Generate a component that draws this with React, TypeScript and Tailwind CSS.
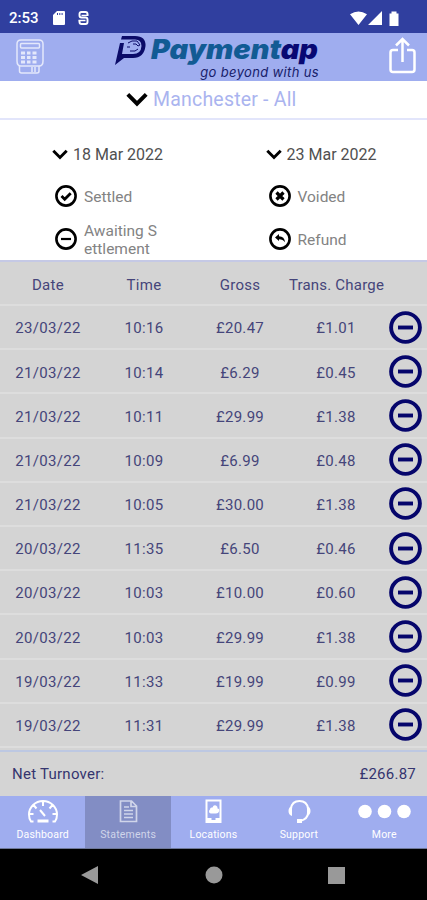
import type { ReactNode } from "react";

const ROWS = [
  ["23/03/22", "10:16", "£20.47", "£1.01"],
  ["21/03/22", "10:14", "£6.29", "£0.45"],
  ["21/03/22", "10:11", "£29.99", "£1.38"],
  ["21/03/22", "10:09", "£6.99", "£0.48"],
  ["21/03/22", "10:05", "£30.00", "£1.38"],
  ["20/03/22", "11:35", "£6.50", "£0.46"],
  ["20/03/22", "10:03", "£10.00", "£0.60"],
  ["20/03/22", "10:03", "£29.99", "£1.38"],
  ["19/03/22", "11:33", "£19.99", "£0.99"],
  ["19/03/22", "11:31", "£29.99", "£1.38"],
];

function Chevron({ className }: { className: string }) {
  return (
    <svg viewBox="0 0 22 15" className={className} fill="none" stroke="currentColor" strokeWidth="4">
      <path d="M1.8 2.4 11 11.6 20.2 2.4" />
    </svg>
  );
}

function Ring({ className, children }: { className: string; children: ReactNode }) {
  return (
    <svg viewBox="0 0 22 22" className={className} fill="none" stroke="currentColor" strokeWidth="2.6">
      <circle cx="11" cy="11" r="9.6" />
      {children}
    </svg>
  );
}

function StatusBar() {
  return (
    <div className="flex h-[33px] shrink-0 items-center bg-[#303f9f] pl-[9px] pr-[27px] pt-[3px] text-white">
      <span className="w-[44px] pt-px text-[15px] font-medium">2:53</span>
      <svg className="h-[14px] w-[12px]" viewBox="0 0 12 14" fill="currentColor">
        <path fillRule="evenodd" d="M4 0h7q1 0 1 1v12q0 1-1 1H1q-1 0-1-1V4zM4 2v2h1V2zM6.3 2v2h1V2zM8.6 2v2h1V2z" />
      </svg>
      <svg className="ml-[13px] h-[14px] w-[11px]" viewBox="0 0 11 14" fill="none" stroke="currentColor" strokeWidth="1.9">
        <path d="M9.500 4V3q0-2-2-2h-4q-2 0-2 2v1.500q0 2 2 2h4q2 0 2 2V11q0 2-2 2h-4q-2 0-2-2V9.500" />
        <path d="M3.500 4.300h7M.5 9.500h7" strokeWidth="1.300" />
      </svg>
      <svg className="ml-auto h-[15px] w-[50px]" viewBox="0 0 50 15" fill="currentColor">
        <path d="M0 3.200Q8.500-2.400 17 3.200L8.500 14zM32 0v14H18zM39.500 2.500h2V.5h5v2h2V15h-9z" />
      </svg>
    </div>
  );
}

function Header() {
  return (
    <header className="flex h-[48px] shrink-0 items-center bg-[#9fadef] text-white">
      <svg className="ml-[16px] h-[36px] w-[28px]" viewBox="0 0 28 36" fill="none" stroke="#e4e8fb" strokeWidth="1.500">
        <path d="M5 1h18q4 0 4 4v17q0 5-4 5H5q-4 0-4-5V5q0-4 4-4z" />
        <rect x="4.500" y="4.500" width="19" height="4.500" rx="1" />
        <path d="M3.500 27v5q0 2 2 2H21q2 0 2-2v-5M16 28v5M19 28v5" />
        <path d="M5 14h4m2 0h3.500m2 0h4M5 18.500h4m2 0h3.500m2 0h4M5 23h4m2 0h3.500m2 0h4" strokeWidth="3" />
      </svg>
      <div className="ml-[70px] flex w-[205px]">
        <svg className="h-[31px] w-[33px] shrink-0" viewBox="0 0 33 31">
          <path fillRule="evenodd" fill="#0b0b68" d="M8 1h13q11 0 10.500 10Q30 23 19 23h-9l-9 7L6 8h4L8 19h11q8 0 8.500-8Q27.500 4.500 21 4.500H7z" />
          <path fill="none" stroke="#0b0b68" strokeWidth="1" d="m14 8 4-2h5l3 4-2 1-2-2h-3m-6 3h3m0 4h5l3-2" />
        </svg>
        <div className="w-[172px] font-['Inter'] italic">
          <svg className="block h-[31px] w-[172px] overflow-visible" viewBox="0 0 172 31">
            <text x="4" y="23.500" textLength="167" lengthAdjust="spacingAndGlyphs" fontSize="26.500" fontWeight="900" fill="#125b94">
              Payment<tspan fill="#080873">ap</tspan>
            </text>
          </svg>
          <div className="mt-[-1px] whitespace-nowrap text-right text-[13px] leading-[14px] tracking-[0.350px] text-[#17206a]">go beyond with us</div>
        </div>
      </div>
      <svg className="mb-[3px] ml-auto mr-[11px] h-[37px] w-[27px]" viewBox="0 0 27 37" fill="none" stroke="currentColor" strokeWidth="2.500">
        <path d="M9 13H4q-2.500 0-2.500 2.500v17Q1.500 35 4 35h19q2.500 0 2.500-2.500v-17Q25.500 13 23 13h-5M13.500 25V2M7 8.500 13.500 2 20 8.500" />
      </svg>
    </header>
  );
}

function Legend({ label, children }: { label: ReactNode; children: ReactNode }) {
  return (
    <div className="flex h-[43px] items-center pl-[55px] text-[15.5px] leading-[18px] text-[#838383]">
      <Ring className="mr-[7px] size-[22px] text-black">{children}</Ring>
      <span className="pt-[2px]">{label}</span>
    </div>
  );
}

function Filters() {
  return (
    <section className="grid h-[142px] shrink-0 grid-cols-2 content-start border-b-2 border-[#c5c9e5] pt-[14px]">
      {["18 Mar 2022", "23 Mar 2022"].map((d) => (
        <div key={d} className="flex h-[40px] items-center pl-[52px] text-[16px] text-[#505050]">
          <Chevron className="mr-[5px] h-[11px] w-[16px] text-black" />
          <span className="pt-[2px]">{d}</span>
        </div>
      ))}
      <Legend label="Settled"><path d="m6.500 11 3.200 3.200 6-6" strokeWidth="2.800" /></Legend>
      <Legend label="Voided"><path d="m7.500 7.500 7 7m0-7-7 7" strokeWidth="3.200" /></Legend>
      <Legend label={<>Awaiting S<br />ettlement</>}><path d="M6 11h10" strokeWidth="2.200" /></Legend>
      <Legend label="Refund">
        <path d="M6 9.500 10 6v2.300q5.500 0 6 6-2-3-6-3V13z" fill="currentColor" stroke="none" />
      </Legend>
    </section>
  );
}

function Statement() {
  return (
    <section className="h-[488px] shrink-0 overflow-hidden bg-[#d4d4d4] text-[15px] tracking-[0.3px] text-[#45457a]">
      <div className="grid h-[44px] grid-cols-[96px_96px_96px_97px_1fr] items-center border-b-2 border-[#dddddd] pt-[4px] text-center">
        <span>Date</span>
        <span>Time</span>
        <span>Gross</span>
        <span className="whitespace-nowrap tracking-[0.2px]">Trans. Charge</span>
      </div>
      {ROWS.map((r, i) => (
        <div key={i} className="grid h-[44.200px] grid-cols-[96px_96px_96px_96px_1fr] items-center border-b-2 border-[#dddddd] text-center">
          {r.map((v, j) => <span key={j} className="pt-[3px]">{v}</span>)}
          <Ring className="ml-[5px] size-[33px] text-[#05056b]"><path d="M6 11h10" /></Ring>
        </div>
      ))}
    </section>
  );
}

function Tab({ label, active, children }: { label: string; active?: boolean; children: ReactNode }) {
  return (
    <div className={`flex flex-col items-center pt-[3px] ${active ? "bg-[#828dc4] text-[#d0d5ea]" : "text-white"}`}>
      <svg className="h-[25px] w-[54px]" viewBox="0 0 54 25" fill="none" stroke="currentColor" strokeWidth="2">{children}</svg>
      <span className="mt-[4px] text-[10.500px] leading-[14px] tracking-[0.200px]">{label}</span>
    </div>
  );
}

function Tabs() {
  return (
    <nav className="grid h-[53px] shrink-0 grid-cols-5 border-b border-[#6e7899] bg-[#9fadef]">
      <Tab label="Dashboard">
        <path d="M17.500 22.500H15Q13 20 13 15.500a14 13.500 0 0 1 28 0q0 4.500-2 7h-2.500M27 2.500V7M17.500 6l3 3.500M36.500 6l-3 3.500M13 15h4.500M41 15h-4.500M24 11l5 6" />
        <path d="M21.500 22h11" strokeWidth="3" />
      </Tab>
      <Tab label="Statements" active>
        <path d="M19.500 2h11l5 5v15.500h-16zM30 2v5.500h5M23 8h5M23 11.500h9M23 15h9M23 18.500h9" strokeWidth="1.700" />
      </Tab>
      <Tab label="Locations">
        <path d="M20.500 1.500h14v21.500h-14z" />
        <path d="M20 19h5.500v2h4v-2H35v5H20zM24 10.500q0-2.500 2.500-2 1-3 3.500-2 2 1 1.500 3 2.500 0 1.500 3-.5 2-3 2h-4q-3 0-3-2 0-1.500 1-2z" fill="currentColor" stroke="none" />
      </Tab>
      <Tab label="Support">
        <path d="M19 14V9.500Q20 2 27.500 2T36 9.500V14q0 6-8 8" />
        <path d="M20 7v10q-3.500-1-3.500-5T20 7zM35 7v10q3.500-1 3.500-5T35 7zM25 20h5v4h-5z" fill="currentColor" stroke="none" />
      </Tab>
      <Tab label="More">
        <g fill="currentColor" stroke="none"><circle cx="8" cy="12.500" r="6.800" /><circle cx="27.500" cy="12.500" r="6.800" /><circle cx="47" cy="12.500" r="6.800" /></g>
      </Tab>
    </nav>
  );
}

export default function App() {
  return (
    <main className="flex h-[900px] w-[427px] flex-col overflow-hidden bg-white font-['Roboto',sans-serif]">
      <StatusBar />
      <Header />
      <div className="flex h-[39px] shrink-0 items-center border-b-2 border-[#e2e5fb] pl-[126px] text-[19.500px] tracking-[0.2px] text-[#aab4ef]">
        <Chevron className="mr-[5px] h-[15px] w-[22px] text-black" />
        Manchester - All
      </div>
      <Filters />
      <Statement />
      <div className="flex h-[46px] shrink-0 items-center justify-between border-t-2 border-[#bdc8e2] bg-[#d4d4d4] pl-[12px] pr-[11px] text-[15px] tracking-[0.250px] text-[#35356f]">
        <span>Net Turnover:</span>
        <span>£266.87</span>
      </div>
      <Tabs />
      <div className="flex h-[51px] items-center bg-black text-[#999]">
        <svg className="ml-[81px] h-[18px] w-[264px]" viewBox="0 0 264 18" fill="currentColor">
          <path d="M0 9 17 0v18zM247 1h17v17h-17z" />
          <circle cx="133" cy="9" r="8.500" />
        </svg>
      </div>
    </main>
  );
}
